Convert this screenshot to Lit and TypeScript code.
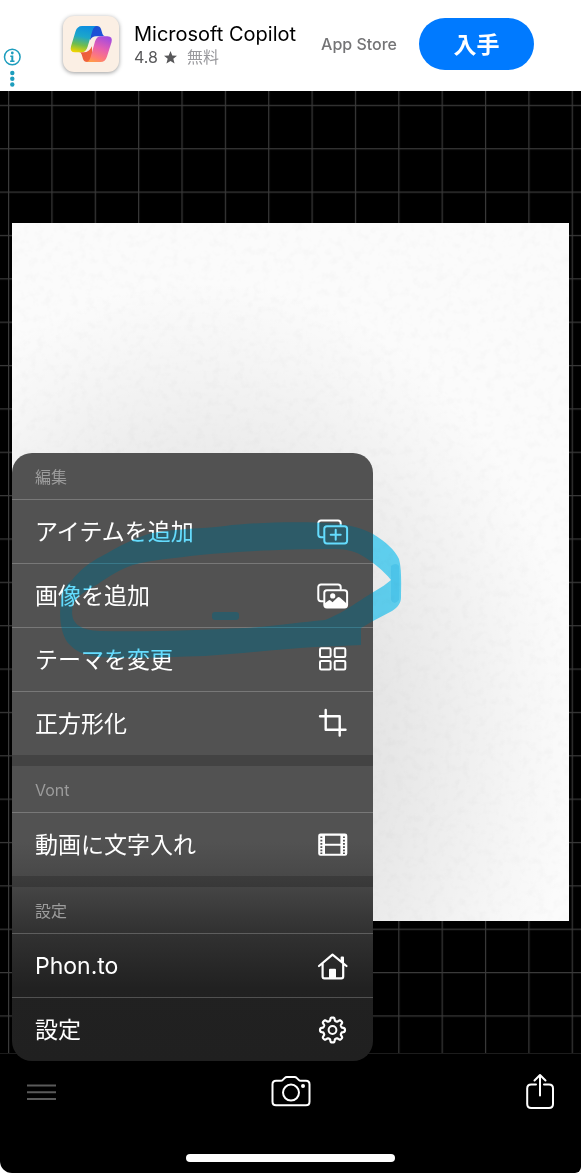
import { LitElement, html, css, svg } from "lit";
import { customElement } from "lit/decorators.js";

const gearPath = (() => {
  const points: string[] = [];
  for (let i = 0; i < 160; i++) {
    const a = (i / 160) * Math.PI * 2;
    const r = 10.9 + 1.6 * Math.tanh(2.2 * Math.cos(8 * a));
    points.push(`${(15.5 + r * Math.sin(a)).toFixed(2)} ${(16 - r * Math.cos(a)).toFixed(2)}`);
  }
  return `M${points.join("L")}Z`;
})();

const backCard = svg`<path d="M6 21.2H4a2.7 2.7 0 0 1-2.7-2.7V7.1A2.7 2.7 0 0 1 4 4.4h17a2.7 2.7 0 0 1 2.7 2.7V9"/>`;
const sprockets = [7.4, 10.7, 14, 17.3, 20.6, 23.4]
  .map((y) => `M3.4 ${y}h1.9v1.7h-1.9ZM26 ${y}h1.9v1.7h-1.9Z`)
  .join("");

const icons = {
  add: svg`${backCard}<rect x="7.3" y="10.2" width="22.8" height="17.2" rx="2.6"/><path d="M18.7 13.8v10M13.7 18.8h10"/>`,
  image: svg`${backCard}<rect x="7.3" y="10.2" width="22.8" height="17.2" rx="2.6"/><circle class="solid" cx="15.7" cy="15.9" r="2.6"/><path class="solid" d="M7.5 23.6l4-3.2q1-.7 2 .1l2 1.7 5-4.6q1.2-1 2.4 0l7 6.2V26q0 1.5-1.6 1.5H9.1q-1.6 0-1.6-1.5Z"/>`,
  theme: svg`<rect x="3" y="4.3" width="10.6" height="8.6" rx="1.2"/><rect x="17.7" y="4.3" width="10.6" height="8.6" rx="1.2"/><rect x="3" y="16.9" width="10.6" height="8.6" rx="1.2"/><rect x="17.7" y="16.9" width="10.6" height="8.6" rx="1.2"/>`,
  crop: svg`<path stroke-width="2.4" d="M3 8.2H22.7V27.5M8.7 2V21.8H28.5"/>`,
  film: svg`<path class="solid" fill-rule="evenodd" d="M3.5 4.5H28a2.3 2.3 0 0 1 2.3 2.3V24.5A2.3 2.3 0 0 1 28 26.8H3.5A2.3 2.3 0 0 1 1.2 24.5V6.8A2.3 2.3 0 0 1 3.5 4.5ZM8 6.7V14.8H23.4V6.7ZM8 16.8V24.7H23.4V16.8Z${sprockets}"/>`,
  home: svg`<path stroke-width="2.2" d="M2 16 15.5 4.6 29.5 16M5.6 13.6V26.6q0 1.8 1.8 1.8H24.4q1.8 0 1.8-1.8V13.6"/><path class="solid" d="M12 19.8q0-1 1-1H18q1 0 1 1V28H12ZM23.6 7.5q0-1 1-1h1.4q1 0 1 1v6.500l-3.400-3Z"/>`,
  gear: svg`<path stroke-width="2.2" d="${gearPath}"/><circle cx="15.5" cy="16" r="3.9"/>`,
};

type IconName = keyof typeof icons;

interface Section {
  title: string;
  items: { label: string; icon: IconName }[];
}

const sections: Section[] = [
  {
    title: "編集",
    items: [
      { label: "アイテムを追加", icon: "add" },
      { label: "画像を追加", icon: "image" },
      { label: "テーマを変更", icon: "theme" },
      { label: "正方形化", icon: "crop" },
    ],
  },
  { title: "Vont", items: [{ label: "動画に文字入れ", icon: "film" }] },
  {
    title: "設定",
    items: [
      { label: "Phon.to", icon: "home" },
      { label: "設定", icon: "gear" },
    ],
  },
];

@customElement("ad-banner")
class AdBanner extends LitElement {
  static styles = css`
    :host {
      display: flex;
      height: 91px;
      background: #fff;
      color: #000;
    }
    .choices {
      align-self: flex-end;
      width: 24px;
      height: 44px;
      margin-right: 39px;
    }
    .app {
      display: flex;
      align-items: center;
      height: 88px;
      min-width: 0;
    }
    .logo {
      width: 56px;
      height: 56px;
      flex: none;
      border-radius: 11px;
      background: #fbefe4;
      box-shadow: 0 1px 4px rgba(0, 0, 0, 0.4);
      margin-right: 15px;
    }
    .details {
      padding-top: 2px;
    }
    .name {
      font-size: 20px;
      line-height: 24px;
      white-space: nowrap;
    }
    .meta {
      display: flex;
      align-items: center;
      gap: 6px;
      font-size: 16px;
      line-height: 22px;
      color: #58585a;
    }
    .price {
      color: #98989c;
      margin-left: 4px;
    }
    .store {
      margin: 0 22px 0 25px;
      font-size: 16px;
      line-height: 20px;
      font-weight: 500;
      color: #747476;
      white-space: nowrap;
    }
    .get {
      width: 115px;
      height: 52px;
      flex: none;
      border: 0;
      padding: 2px 0 0;
      border-radius: 26px;
      background: #007aff;
      color: #fff;
      font: inherit;
      font-size: 23px;
      line-height: 28px;
      font-weight: 700;
    }
  `;

  render() {
    return html`
      <svg class="choices" viewBox="0 0 24 44" fill="#1d9dbd">
        <circle cx="12.3" cy="10" r="7.8" fill="none" stroke="#1d9dbd" stroke-width="1.5" />
        <circle cx="12.3" cy="6" r="1.4" />
        <path d="M10.3 8.5h3v5h1.2v1.5h-4.4v-1.5h1.200v-3.500h-1Z" />
        <circle cx="12.3" cy="26" r="2.2" />
        <circle cx="12.3" cy="31.7" r="2.2" />
        <circle cx="12.3" cy="37.5" r="2.2" />
      </svg>
      <div class="app">
        <svg class="logo" viewBox="0 0 56 56">
          <defs>
            <linearGradient id="cool" x1="0.5" y1="0" x2="0.3" y2="1">
              <stop offset="0" stop-color="#0d8fdf" />
              <stop offset="0.4" stop-color="#1da7c9" />
              <stop offset="0.72" stop-color="#72bd4c" />
              <stop offset="1" stop-color="#f0d400" />
            </linearGradient>
            <linearGradient id="warm" x1="0.7" y1="0" x2="0.3" y2="1">
              <stop offset="0" stop-color="#a34be0" />
              <stop offset="0.45" stop-color="#e65fb0" />
              <stop offset="0.8" stop-color="#ff7b78" />
              <stop offset="1" stop-color="#ff9a4a" />
            </linearGradient>
            <linearGradient id="navy" x1="0" y1="0" x2="1" y2="1">
              <stop offset="0" stop-color="#1b50d0" />
              <stop offset="1" stop-color="#2052dd" />
            </linearGradient>
            <linearGradient id="ember" x1="0" y1="0" x2="1" y2="1">
              <stop offset="0" stop-color="#e8583c" />
              <stop offset="1" stop-color="#f2663d" />
            </linearGradient>
          </defs>
          <path fill="url(#navy)" d="M28 10h6q3 0 4 3l1.5 5q.6 2 2.5 2.300h-9q-4 0-6 4Z" />
          <path fill="url(#ember)" d="M29 46h-5q-3 0-4-3l-1.300-4.600Q18 36.300 16 36.300h5q5 0 8-6Z" />
          <path fill="url(#cool)" d="M19 10H34q-3 0-4.500 4.500L24.500 31q-1.600 5.300-6 5.300H12q-5.500 0-4-6L12.500 15.500Q14.200 10 19 10Z" />
          <path fill="url(#warm)" d="M37.500 46H22.500q3.500 0 5-4.500L32 25.500q1.600-5.300 6-5.300h6.500q5.500 0 4 6L44 40.500Q42.300 46 37.500 46Z" />
        </svg>
        <div class="details">
          <div class="name">Microsoft Copilot</div>
          <div class="meta">
            <span>4.8</span>
            <svg width="13" height="13" viewBox="0 0 24 24" fill="currentColor"><path d="M12 0l3.300 8.300 8.700.5-6.800 5.600 2.300 8.700L12 18.300l-7.500 4.800 2.300-8.700L0 8.800l8.700-.5Z" /></svg>
            <span class="price">無料</span>
          </div>
        </div>
        <span class="store">App Store</span>
        <button class="get">入手</button>
      </div>
    `;
  }
}

@customElement("context-menu")
class ContextMenu extends LitElement {
  static styles = css`
    :host {
      display: block;
      border-radius: 20px;
      overflow: hidden;
      background: linear-gradient(#525252 0%, #525252 64%, #464646 71%, #333 78%, #212121 88%, #202020 100%);
      color: #fff;
    }
    section + section {
      border-top: 11px solid rgba(0, 0, 0, 0.18);
    }
    .title {
      margin: 0;
      padding: 2px 23px 0;
      font-size: 16px;
      font-weight: 400;
      line-height: 44px;
      color: #9c9c9c;
      border-bottom: 1px solid rgba(255, 255, 255, 0.22);
    }
    ul {
      margin: 0;
      padding: 0;
      list-style: none;
    }
    li + li {
      border-top: 1px solid rgba(255, 255, 255, 0.22);
    }
    .item {
      display: flex;
      align-items: center;
      justify-content: space-between;
      width: 100%;
      height: 63px;
      padding: 0 24px 0 23px;
      border: 0;
      background: none;
      color: inherit;
      font: inherit;
      font-size: 23px;
      line-height: 28px;
      text-align: left;
    }
    .icon {
      width: 32px;
      height: 32px;
      fill: none;
      stroke: currentColor;
      stroke-width: 2;
      stroke-linecap: round;
      stroke-linejoin: round;
    }
    .solid {
      fill: currentColor;
      stroke: none;
    }
  `;

  render() {
    return sections.map(
      (section) => html`
        <section>
          <h2 class="title">${section.title}</h2>
          <ul>
            ${section.items.map(
              (item) => html`<li>
                <button class="item">
                  <span>${item.label}</span>
                  <svg class="icon" viewBox="0 0 32 32">${icons[item.icon]}</svg>
                </button>
              </li>`
            )}
          </ul>
        </section>
      `
    );
  }
}

const markerShape = svg`
  <path fill-rule="evenodd" d="M61 600C62 590 66 585 72 580C80 570 90 562 102 556C118 547 134 538 152 533C180 528 200 529 225 526C255 522 310 521 340 524C352 526 362 528 373 534C386 542 395 550 399 559C402 570 401 588 401 597C401 603 398 607 392 611L373 621L361 628V645Q340 646 315 647C280 649 240 654 205 656C170 657 130 659 100 657C85 656 75 651 68 643C60 632 59 615 61 600ZM73 605C69 622 78 630 100 631C150 632 200 630 245 628C280 626 300 622 325 620C340 614 350 607 361 600C372 592 382 588 391 580C384 571 372 561 361 555C352 550 345 549 330 549C290 549 240 551 200 555C175 558 150 560 133 565C120 569 108 577 98 584C86 591 76 596 73 605Z"/>
  <rect x="212" y="612" width="27" height="8" rx="3"/>
`;

@customElement("app-root")
class AppRoot extends LitElement {
  static styles = css`
    :host {
      display: flex;
      flex-direction: column;
      min-height: 100vh;
      background: #fff;
      font-family: Inter, "Noto Sans CJK JP", sans-serif;
    }
    .stage {
      position: relative;
      flex: 1;
      display: grid;
      align-items: center;
      padding: 0 12px;
      background: #000;
    }
    .grid {
      position: absolute;
      inset: 0;
      width: 100%;
      height: 100%;
    }
    .paper {
      position: relative;
      aspect-ratio: 557 / 698;
      background:
        radial-gradient(ellipse 68% 66% at 34% 74%, rgba(0, 0, 0, 0.09) 45%, rgba(0, 0, 0, 0.05) 68%, rgba(0, 0, 0, 0.02) 86%, transparent),
        #fbfbfb;
    }
    .grain {
      display: block;
      width: 100%;
      height: 100%;
      opacity: 0.012;
    }
    .popup {
      position: absolute;
      left: 12px;
      bottom: -8px;
      width: 361px;
    }
    .marker {
      position: absolute;
      left: 38px;
      top: 57px;
      width: 360px;
      height: 160px;
      pointer-events: none;
    }
    .ink {
      fill: #52bede;
      mix-blend-mode: multiply;
    }
    .overlap {
      fill: #b0f0ff;
    }
    .glow {
      fill: #121e20;
      mix-blend-mode: plus-lighter;
    }
    .bar {
      display: flex;
      flex-direction: column;
      justify-content: space-between;
      align-items: center;
      height: 120px;
      box-sizing: border-box;
      padding: 18px 0 11px;
      border-top: 1px solid #1c1c1c;
      border-radius: 0 0 6px 12px;
      background: #000;
    }
    .tools {
      display: flex;
      justify-content: space-between;
      align-self: stretch;
      padding: 0 26px;
    }
    .tool {
      border: 0;
      padding: 0;
      background: none;
      color: #fff;
      height: 40px;
    }
    .tool svg {
      display: block;
      fill: none;
      stroke: currentColor;
      stroke-width: 2;
      stroke-linecap: round;
      stroke-linejoin: round;
    }
    .dim {
      color: #5a5a5a;
    }
    .home {
      width: 36%;
      height: 8px;
      border-radius: 4px;
      background: #fff;
    }
  `;

  render() {
    return html`
      <ad-banner></ad-banner>
      <main class="stage">
        <svg class="grid">
          <defs>
            <pattern id="cells" x="8" y="13.8" width="43.36" height="43.36" patternUnits="userSpaceOnUse">
              <path d="M0 .6H43.36M.6 0V43.36" stroke="#3a3a3a" stroke-width="1.2" />
            </pattern>
          </defs>
          <rect width="100%" height="100%" fill="url(#cells)" />
        </svg>
        <div class="paper">
          <svg class="grain">
            <filter id="fibre">
              <feTurbulence type="fractalNoise" baseFrequency="0.12" numOctaves="3" />
              <feColorMatrix values="0 0 0 0 0  0 0 0 0 0  0 0 0 0 0  3 0 0 0 -1.3" />
            </filter>
            <rect width="100%" height="100%" filter="url(#fibre)" />
          </svg>
        </div>
        <div class="popup">
          <context-menu></context-menu>
          <svg class="marker ink" viewBox="50 510 360 160">
            ${markerShape}
            <path fill="#3fb4da" d="M391 566q5-4 8 0 1 18 0 34-5 6-8 0Z" />
          </svg>
          <svg class="marker glow" viewBox="50 510 360 160">${markerShape}</svg>
        </div>
      </main>
      <footer class="bar">
        <div class="tools">
          <button class="tool dim" aria-label="メニュー">
            <svg width="30" height="40" viewBox="1 0 30 40"><path stroke-linecap="butt" d="M2 13.5h29M2 20.2h29M2 27h29" /></svg>
          </button>
          <button class="tool" aria-label="カメラ">
            <svg width="40" height="40" viewBox="0 0 40 40">
              <path d="M5 8.8H9.5q1.5 0 2.6-1.2l1.5-1.5q1-1 2.4-1H23.5q1.4 0 2.4 1l1.5 1.5q1.1 1.2 2.6 1.2h5q3.5 0 3.5 3.5V29.8q0 3.5-3.5 3.5H5q-3.5 0-3.5-3.5V12.3q0-3.5 3.5-3.5Z" />
              <circle cx="20" cy="20.6" r="8" />
              <circle cx="32" cy="14" r="1" fill="currentColor" />
            </svg>
          </button>
          <button class="tool" aria-label="共有">
            <svg width="30" height="40" viewBox="0 0 30 40">
              <path d="M11 12.6H6.2q-4 0-4 4V32q0 4 4 4H24q4 0 4-4V16.6q0-4-4-4H19M15 23.5V3.5M9.5 8.5 15 3l5.5 5.5" />
            </svg>
          </button>
        </div>
        <div class="home"></div>
      </footer>
    `;
  }
}
